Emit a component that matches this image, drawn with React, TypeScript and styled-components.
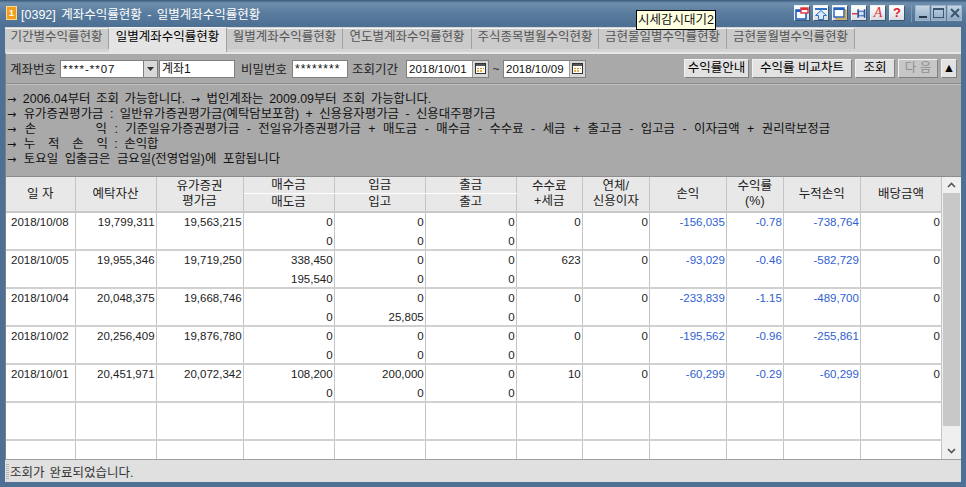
import React, {FC, ReactNode} from 'react';
import styled, {createGlobalStyle} from 'styled-components';

const FONT = `"Liberation Sans", "Noto Sans CJK KR", sans-serif`;

const tabs = [
  {label: '기간별수익률현황', width: 104},
  {label: '일별계좌수익률현황', width: 118, active: true},
  {label: '월별계좌수익률현황', width: 116},
  {label: '연도별계좌수익률현황', width: 129},
  {label: '주식종목별월수익현황', width: 127},
  {label: '금현물일별수익률현황', width: 128},
  {label: '금현물월별수익률현황', width: 128},
];

const notes = [
  {text: '→ 2006.04부터 조회 가능합니다. → 법인계좌는 2009.09부터 조회 가능합니다.', spacing: 2.2},
  {text: '→ 유가증권평가금 : 일반유가증권평가금(예탁담보포함) + 신용융자평가금 - 신용대주평가금', spacing: 3},
  {text: '→ 손        익 : 기준일유가증권평가금 - 전일유가증권평가금 + 매도금 - 매수금 - 수수료 - 세금 + 출고금 - 입고금 - 이자금액 + 권리락보정금', spacing: 4},
  {text: '→ 누  적  손  익 : 손익합', spacing: 3},
  {text: '→ 토요일 입출금은 금요일(전영업일)에 포함됩니다', spacing: 3.2},
];

const columns = [69, 81, 87, 91, 91, 91, 66, 67, 77, 57, 77, 81];

const rows = [
  {date: '2018/10/08', deposit: '19,799,311', stock: '19,563,215', buy: '0', sell: '0', cashIn: '0', stockIn: '0', cashOut: '0', stockOut: '0', fee: '0', interest: '0', profit: '-156,035', rate: '-0.78', total: '-738,764', dividend: '0'},
  {date: '2018/10/05', deposit: '19,955,346', stock: '19,719,250', buy: '338,450', sell: '195,540', cashIn: '0', stockIn: '0', cashOut: '0', stockOut: '0', fee: '623', interest: '0', profit: '-93,029', rate: '-0.46', total: '-582,729', dividend: '0'},
  {date: '2018/10/04', deposit: '20,048,375', stock: '19,668,746', buy: '0', sell: '0', cashIn: '0', stockIn: '25,805', cashOut: '0', stockOut: '0', fee: '0', interest: '0', profit: '-233,839', rate: '-1.15', total: '-489,700', dividend: '0'},
  {date: '2018/10/02', deposit: '20,256,409', stock: '19,876,780', buy: '0', sell: '0', cashIn: '0', stockIn: '0', cashOut: '0', stockOut: '0', fee: '0', interest: '0', profit: '-195,562', rate: '-0.96', total: '-255,861', dividend: '0'},
  {date: '2018/10/01', deposit: '20,451,971', stock: '20,072,342', buy: '108,200', sell: '0', cashIn: '200,000', stockIn: '0', cashOut: '0', stockOut: '0', fee: '10', interest: '0', profit: '-60,299', rate: '-0.29', total: '-60,299', dividend: '0'},
];

const CalendarIcon: FC = () => (
  <svg width="11" height="11" viewBox="0 0 11 11">
    <rect x="0.5" y="0.5" width="10" height="10" fill="#fff" stroke="#333" />
    <rect x="1" y="1" width="9" height="2" fill="#555" />
    <rect x="2" y="5" width="2" height="1" fill="#e08a20" />
    <rect x="5" y="5" width="2" height="1" fill="#e08a20" />
    <rect x="8" y="5" width="1" height="1" fill="#e08a20" />
    <rect x="2" y="7" width="2" height="2" fill="#e8b040" />
    <rect x="5" y="7" width="2" height="2" fill="#e8b040" />
  </svg>
);

// the arrows need their own font, Liberation's are too small
const noteParts = (text: string) =>
  text.split(/(→)/).map((part, idx) => (part === '→' ? <Arrow key={idx}>→</Arrow> : part));

const DataCell: FC<{children?: ReactNode; $blue?: boolean}> = ({children, $blue}) => (
  <Cell $blue={$blue}>
    <Lines>{children}</Lines>
  </Cell>
);

const App: FC = () => (
  <Window>
    <GlobalStyle />
    <TitleBar>
      <Logo>1</Logo>
      <Title>[0392] 계좌수익률현황 - 일별계좌수익률현황</Title>
      <ToolIcons>
        <ToolButton>
          <svg width="14" height="13" viewBox="0 0 14 13">
            <rect x="1" y="3" width="10" height="9" fill="#fff" stroke="#1f5fc0" strokeWidth="1.6" />
            <rect x="1" y="3" width="10" height="2" fill="#1f5fc0" />
            <rect x="6" y="1" width="7" height="5" fill="#fff" stroke="#e0303a" strokeWidth="1.4" />
            <rect x="6" y="1" width="7" height="2" fill="#e0303a" />
          </svg>
        </ToolButton>
        <ToolButton>
          <svg width="14" height="13" viewBox="0 0 14 13">
            <rect x="1" y="1" width="12" height="2" fill="#2d6fc4" />
            <path d="M7 3.5 L12.5 8.5 H9.5 V12.5 H4.5 V8.5 H1.5 Z" fill="#dbe9f8" stroke="#2d6fc4" />
          </svg>
        </ToolButton>
        <ToolButton>
          <svg width="14" height="13" viewBox="0 0 14 13">
            <rect x="3" y="3" width="10" height="9" fill="#f4d070" stroke="#b08a30" />
            <rect x="1" y="1" width="10" height="9" fill="#fff" stroke="#1f5fc0" strokeWidth="1.4" />
            <rect x="1" y="1" width="10" height="2" fill="#1f5fc0" />
          </svg>
        </ToolButton>
        <ToolButton>
          <svg width="14" height="13" viewBox="0 0 15 13">
            <rect x="0" y="6" width="6" height="1.5" fill="#e0303a" />
            <path d="M6.5 2 V11 M13.5 2 V11" stroke="#1f4fa0" strokeWidth="1.6" />
            <rect x="7" y="4" width="6" height="5" fill="#cfe0f4" stroke="#1f4fa0" />
          </svg>
        </ToolButton>
        <ToolButton>
          <LetterIcon>A</LetterIcon>
        </ToolButton>
        <ToolButton>
          <HelpIcon>?</HelpIcon>
        </ToolButton>
        <ToolDivider />
        <WindowButton>
          <svg width="10" height="10" viewBox="0 0 10 10">
            <rect x="1" y="8" width="8" height="2" fill="#26384c" />
          </svg>
        </WindowButton>
        <WindowButton>
          <svg width="11" height="10" viewBox="0 0 11 10">
            <rect x="0.5" y="0.5" width="10" height="9" fill="none" stroke="#3c5570" />
            <rect x="0.5" y="0.5" width="10" height="1.5" fill="#3c5570" />
          </svg>
        </WindowButton>
        <WindowButton>
          <svg width="10" height="10" viewBox="0 0 10 10">
            <path d="M1 1 L9 9 M9 1 L1 9" stroke="#3c5570" strokeWidth="2" />
          </svg>
        </WindowButton>
      </ToolIcons>
    </TitleBar>
    <Tooltip>시세감시대기2</Tooltip>
    <TabStrip>
      {tabs.map(({label, width, active}) => (
        <Tab key={label} $active={active} $width={width}>
          {label}
        </Tab>
      ))}
    </TabStrip>
    <Panel>
      <Toolbar>
        <FieldLabel>계좌번호</FieldLabel>
        <Combo>
          <Masked>****-**07</Masked>
          <ComboArrow>
            <svg width="7" height="4" viewBox="0 0 7 4">
              <path d="M0 0 H7 L3.5 4 Z" fill="#333" />
            </svg>
          </ComboArrow>
        </Combo>
        <AccountName>계좌1</AccountName>
        <PasswordLabel>비밀번호</PasswordLabel>
        <Password>********</Password>
        <PeriodLabel>조회기간</PeriodLabel>
        <DateField>
          2018/10/01
          <CalendarButton>
            <CalendarIcon />
          </CalendarButton>
        </DateField>
        <Tilde>~</Tilde>
        <DateField>
          2018/10/09
          <CalendarButton>
            <CalendarIcon />
          </CalendarButton>
        </DateField>
        <Actions>
          <ActionButton $width={65}>수익률안내</ActionButton>
          <ActionButton $width={100}>수익률 비교차트</ActionButton>
          <ActionButton $width={40}>조회</ActionButton>
          <ActionButton $width={40} $disabled>
            다 음
          </ActionButton>
          <ActionButton $width={16}>▲</ActionButton>
        </Actions>
      </Toolbar>
      <Notes>
        {notes.map(({text, spacing}) => (
          <Note key={text} $spacing={spacing}>
            {noteParts(text)}
          </Note>
        ))}
      </Notes>
    </Panel>
    <GridArea>
      <TableWrap>
        <Table>
          <colgroup>
            {columns.map((width, idx) => (
              <col key={idx} style={{width}} />
            ))}
          </colgroup>
          <thead>
            <tr>
              <HCell rowSpan={2}>일 자</HCell>
              <HCell rowSpan={2}>예탁자산</HCell>
              <HCell rowSpan={2}>
                유가증권
                <br />
                평가금
              </HCell>
              <SubHCell>매수금</SubHCell>
              <SubHCell>입금</SubHCell>
              <SubHCell>출금</SubHCell>
              <HCell rowSpan={2}>
                수수료
                <br />
                +세금
              </HCell>
              <HCell rowSpan={2}>
                연체/
                <br />
                신용이자
              </HCell>
              <HCell rowSpan={2}>손익</HCell>
              <HCell rowSpan={2}>
                수익률
                <br />
                (%)
              </HCell>
              <HCell rowSpan={2}>누적손익</HCell>
              <HCell rowSpan={2}>배당금액</HCell>
            </tr>
            <tr>
              <SubHCell>매도금</SubHCell>
              <SubHCell>입고</SubHCell>
              <SubHCell>출고</SubHCell>
            </tr>
          </thead>
          <tbody>
            {rows.map((row) => (
              <tr key={row.date}>
                <DateCell>
                  <Lines>{row.date}</Lines>
                </DateCell>
                <DataCell>{row.deposit}</DataCell>
                <DataCell>{row.stock}</DataCell>
                <DataCell>
                  {row.buy}
                  <br />
                  {row.sell}
                </DataCell>
                <DataCell>
                  {row.cashIn}
                  <br />
                  {row.stockIn}
                </DataCell>
                <DataCell>
                  {row.cashOut}
                  <br />
                  {row.stockOut}
                </DataCell>
                <DataCell>{row.fee}</DataCell>
                <DataCell>{row.interest}</DataCell>
                <DataCell $blue>{row.profit}</DataCell>
                <DataCell $blue>{row.rate}</DataCell>
                <DataCell $blue>{row.total}</DataCell>
                <DataCell>{row.dividend}</DataCell>
              </tr>
            ))}
            <tr>
              {columns.map((_, idx) => (
                <DataCell key={idx} />
              ))}
            </tr>
            <LastRow>
              {columns.map((_, idx) => (
                <Cell key={idx} />
              ))}
            </LastRow>
          </tbody>
        </Table>
      </TableWrap>
      <Scrollbar>
        <ScrollButton>
          <svg width="9" height="6" viewBox="0 0 9 6">
            <path d="M1 5 L4.5 1.5 L8 5" fill="none" stroke="#555" strokeWidth="1.6" />
          </svg>
        </ScrollButton>
        <ScrollThumb />
        <ScrollButton>
          <svg width="9" height="6" viewBox="0 0 9 6">
            <path d="M1 1 L4.5 4.5 L8 1" fill="none" stroke="#555" strokeWidth="1.6" />
          </svg>
        </ScrollButton>
      </Scrollbar>
    </GridArea>
    <StatusBar>
      <Grip />
      조회가 완료되었습니다.
    </StatusBar>
  </Window>
);

const GlobalStyle = createGlobalStyle`
  html, body {
    margin: 0;
    padding: 0;
    overflow: hidden;
    background: #4a6d91;
  }
`;

const Window = styled.div`
  position: relative;
  display: flex;
  flex-direction: column;
  box-sizing: border-box;
  width: 966px;
  height: 487px;
  padding: 0 5px 5px;
  background: linear-gradient(180deg, #395a7c 0, #6e8ead 3px, #5b7d9f 12px, #4d7094 25px);
  font-family: ${FONT};
  font-size: 12px;
  color: #111;
`;

const TitleBar = styled.div`
  display: flex;
  align-items: center;
  height: 27px;
  flex-shrink: 0;
  padding-bottom: 1px;
  box-sizing: border-box;
`;

const Logo = styled.div`
  display: flex;
  align-items: center;
  justify-content: center;
  width: 9px;
  height: 12px;
  margin-left: 1px;
  background: #f0a020;
  border: 1px solid #ffd88a;
  color: #fff;
  font-size: 9px;
  font-weight: bold;
`;

const Title = styled.div`
  margin-left: 4px;
  color: #fff;
  font-size: 12.5px;
  word-spacing: 2px;
  white-space: pre;
`;

const ToolIcons = styled.div`
  display: flex;
  align-items: center;
  gap: 3px;
  margin-left: auto;
  margin-right: -1px;
`;

const ToolButton = styled.div`
  display: flex;
  align-items: center;
  justify-content: center;
  width: 14px;
  height: 14px;
  background: linear-gradient(180deg, #ffffff, #d8dde2);
  border: 1px solid;
  border-color: #eef1f4 #40566c #40566c #eef1f4;
`;

const LetterIcon = styled.span`
  color: #e0303a;
  font-family: "Liberation Serif", serif;
  font-style: italic;
  font-size: 14px;
  line-height: 14px;
`;

const HelpIcon = styled.span`
  color: #e0202a;
  font-family: "Liberation Sans", sans-serif;
  font-weight: bold;
  font-size: 13px;
  line-height: 14px;
`;

const ToolDivider = styled.div`
  width: 1px;
  height: 17px;
  margin: 0 0 0 3px;
  background: #7d97b0;
`;

const WindowButton = styled.div`
  display: flex;
  align-items: center;
  justify-content: center;
  width: 13px;
  height: 14px;
  margin-left: -2px;
  background: linear-gradient(180deg, #c4d4e4, #8fa9c3);
  border: 1px solid #9db4ca;

  &:nth-last-child(3) {
    margin-left: 0;
  }
`;

const Tooltip = styled.div`
  position: absolute;
  left: 636px;
  top: 10px;
  width: 78px;
  height: 18px;
  border: 1px solid #000;
  background: #ffffe1;
  font-size: 12.5px;
  line-height: 18px;
  text-align: center;
  white-space: nowrap;
`;

const TabStrip = styled.div`
  display: flex;
  align-items: flex-end;
  height: 25px;
  flex-shrink: 0;
  background: #d4d4d4;
  box-sizing: border-box;
  padding-bottom: 3px;
`;

const Tab = styled.div<{$active?: boolean; $width: number}>`
  width: ${({$width}) => $width}px;
  height: ${({$active}) => ($active ? 25 : 21)}px;
  margin-bottom: ${({$active}) => ($active ? -3 : 0)}px;
  box-sizing: border-box;
  flex-shrink: 0;
  background: ${({$active}) => ($active ? '#e4e4e4' : '#cbcbcb')};
  border-top: 1px solid #f4f4f4;
  border-right: 1px solid #a0a0a0;
  color: ${({$active}) => ($active ? '#000' : '#555')};
  font-size: 12.5px;
  line-height: ${({$active}) => ($active ? 18 : 17)}px;
  text-align: center;
  white-space: nowrap;
`;

const Panel = styled.div`
  display: flex;
  flex-direction: column;
  height: 124px;
  flex-shrink: 0;
  box-sizing: border-box;
  background: #a9a9a9;
  border-top: 2px solid #e6e6e6;
  border-left: 1px solid #808080;
`;

const Toolbar = styled.div`
  display: flex;
  align-items: center;
  height: 30px;
  flex-shrink: 0;
  padding: 0 4px 0 4px;
  box-sizing: border-box;
  border-bottom: 1px solid #8a8a8a;
  box-shadow: 0 1px 0 #c0c0c0;
`;

const FieldLabel = styled.span`
  font-size: 12.5px;
  color: #222;
  width: 50px;
  flex-shrink: 0;
`;

const PasswordLabel = styled(FieldLabel)`
  margin-left: 6px;
  width: 51px;
`;

const PeriodLabel = styled(FieldLabel)`
  width: 54px;
`;

const Input = styled.div`
  box-sizing: border-box;
  height: 18px;
  background: #fff;
  border: 1px solid #808080;
  font-size: 12px;
  line-height: 16px;
  padding-left: 2px;
  white-space: nowrap;
`;

const Combo = styled(Input)`
  display: flex;
  align-items: center;
  justify-content: space-between;
  width: 98px;
`;

const Masked = styled.span`
  font-size: 11.5px;
  letter-spacing: 1px;
`;

const ComboArrow = styled.div`
  display: flex;
  align-items: center;
  justify-content: center;
  width: 13px;
  height: 16px;
  background: #d8d8d8;
  border-left: 1px solid #808080;
`;

const AccountName = styled(Input)`
  width: 76px;
  margin-left: 1px;
`;

const Password = styled(Input)`
  width: 56px;
  margin-right: 4px;
  letter-spacing: 1px;
`;

const DateField = styled(Input)`
  display: flex;
  align-items: center;
  justify-content: space-between;
  width: 83px;
  font-size: 11.5px;
`;

const CalendarButton = styled.div`
  display: flex;
  align-items: center;
  justify-content: center;
  width: 15px;
  height: 16px;
  background: #d8d8d8;
  border-left: 1px solid #999;
`;

const Tilde = styled.span`
  width: 14px;
  text-align: center;
  color: #333;
`;

const Actions = styled.div`
  display: flex;
  gap: 3px;
  margin-left: auto;
`;

const ActionButton = styled.div<{$width: number; $disabled?: boolean}>`
  width: ${({$width}) => $width}px;
  height: 19px;
  box-sizing: border-box;
  border: 1px solid #f2f2f2;
  border-right-color: #808080;
  border-bottom-color: #808080;
  color: ${({$disabled}) => ($disabled ? '#8f8f8f' : '#000')};
  background: ${({$disabled}) => ($disabled ? '#c6c6c6' : '#e2e2e2')};
  font-size: 12.5px;
  line-height: 17px;
  text-align: center;
  white-space: nowrap;
`;

const Notes = styled.div`
  padding: 8px 0 0 1px;
`;

const Note = styled.div<{$spacing: number}>`
  height: 15px;
  font-size: 12.4px;
  line-height: 15px;
  word-spacing: ${({$spacing}) => $spacing}px;
  color: #111;
  white-space: pre;
`;

const Arrow = styled.span`
  font-family: "DejaVu Sans", sans-serif;
  font-size: 11px;
  line-height: 15px;
  letter-spacing: 1px;
`;

const GridArea = styled.div`
  display: flex;
  height: 284px;
  flex-shrink: 0;
  background: #fff;
  border-top: 1px solid #8c8c8c;
  border-left: 1px solid #808080;
  border-bottom: 1px solid #a0a0a0;
  box-sizing: border-box;
`;

const TableWrap = styled.div`
  width: 936px;
  flex-shrink: 0;
  overflow: hidden;
`;

const Table = styled.table`
  width: 936px;
  table-layout: fixed;
  border-collapse: collapse;
`;

const LastRow = styled.tr`
  height: 20px;
`;

const HCell = styled.th`
  padding: 0;
  background: #e8e8e8;
  border-right: 1px solid #c4c4c4;
  border-bottom: 2px solid #c8c8c8;
  font-size: 12.5px;
  font-weight: normal;
  line-height: 15px;
  color: #222;
  text-align: center;
`;

const SubHCell = styled(HCell)`
  height: 16px;
  line-height: 15px;
  border-bottom: 1px solid #fff;

  tr + tr & {
    height: 17px;
    border-bottom: 2px solid #c8c8c8;
  }
`;

const Cell = styled.td<{$blue?: boolean}>`
  padding: 0 1px 0 0;
  vertical-align: top;
  border-right: 1px solid #c4c4c4;
  border-bottom: 2px solid #d0d0d0;
  color: ${({$blue}) => ($blue ? '#2f5fd0' : '#222')};
  font-size: 11.5px;
  line-height: 19px;
  text-align: right;
  white-space: nowrap;
`;

const DateCell = styled(Cell)`
  text-align: center;
`;

const Lines = styled.div`
  height: 36px;
`;

const Scrollbar = styled.div`
  display: flex;
  flex-direction: column;
  flex: 1;
  background: #efefef;
`;

const ScrollButton = styled.div`
  display: flex;
  align-items: center;
  justify-content: center;
  height: 16px;
  flex-shrink: 0;

  &:last-child {
    margin-top: auto;
  }
`;

const ScrollThumb = styled.div`
  height: 233px;
  margin: 0 1px;
  background: #c8c8c8;
`;

const StatusBar = styled.div`
  display: flex;
  align-items: center;
  flex: 1;
  background: #e0e0e0;
  font-size: 12.5px;
  word-spacing: 1.5px;
  color: #333;
  padding-left: 1px;
`;

const Grip = styled.div`
  width: 3px;
  height: 15px;
  margin-right: 1px;
  background: repeating-linear-gradient(180deg, #b0b0b0 0 1px, #e8e8e8 1px 2px);
`;

export default App;
